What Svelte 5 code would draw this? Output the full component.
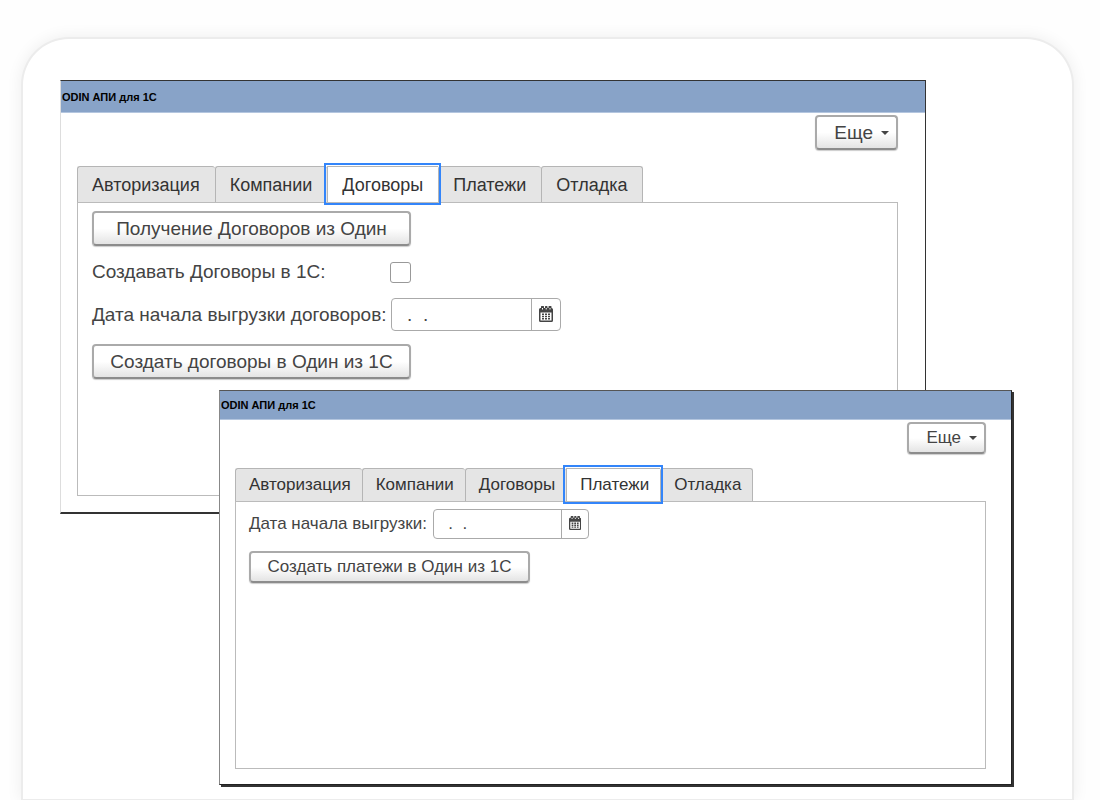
<script>
    const tabs = ["Авторизация", "Компании", "Договоры", "Платежи", "Отладка"];

    let windows = $state([
        { id: "contracts", size: "large", active: "Договоры", date: "  .  .", create: false },
        { id: "payments", size: "small", active: "Платежи", date: "  .  .", create: false }
    ]);
</script>

{#snippet dateField(win, label)}
    <div class="row">
        <label for="{win.id}-date">{label}</label>
        <div class="date">
            <input id="{win.id}-date" type="text" bind:value={win.date} />
            <button type="button" aria-label="Выбрать дату">
                <svg viewBox="0 0 14 16" aria-hidden="true">
                    <path
                        fill="#444"
                        fill-rule="evenodd"
                        d="M1.5 2H2V1a1 1 0 0 1 3 0v1h1V1a1 1 0 0 1 2.500 0v1h1V1a1 1 0 0 1 3 0v1A1.500 1.500 0 0 1 14 3.500v11a1.500 1.500 0 0 1-1.500 1.500h-11A1.500 1.500 0 0 1 0 14.500v-11A1.500 1.500 0 0 1 1.500 2zM1.500 6.500v8h11v-8z"
                    />
                    <path fill="#fff" d="M3 2h1v1.500H3zM6.700 2h1v1.500h-1zM10.500 2h1v1.500h-1z" />
                    <path
                        fill="#444"
                        d="M3 7.500h2V9H3zM6 7.500h2V9H6zM9 7.500h2V9H9zM3 9.800h2v1.500H3zM6 9.800h2v1.500H6zM9 9.800h2v1.500H9zM3 12h2v1.500H3zM6 12h2v1.500H6zM9 12h2v1.500H9z"
                    />
                </svg>
            </button>
        </div>
    </div>
{/snippet}

<main class="card">
    {#each windows as win (win.id)}
        <section class="window {win.size}">
            <h2>ODIN АПИ для 1С</h2>

            <div class="body">
                <div class="toolbar">
                    <button type="button" class="btn more">Еще <span class="caret"></span></button>
                </div>

                <div class="tabs" role="tablist">
                    {#each tabs as tab}
                        <button
                            type="button"
                            role="tab"
                            class="tab"
                            class:active={win.active === tab}
                            aria-selected={win.active === tab}
                            onclick={() => (win.active = tab)}
                        >{tab}</button>
                    {/each}
                </div>

                <div class="panel" role="tabpanel">
                    {#if win.active === "Договоры"}
                        <button type="button" class="btn wide">Получение Договоров из Один</button>
                        <div class="row check">
                            <label for="{win.id}-create">Создавать Договоры в 1С:</label>
                            <input id="{win.id}-create" type="checkbox" bind:checked={win.create} />
                        </div>
                        {@render dateField(win, "Дата начала выгрузки договоров:")}
                        <button type="button" class="btn wide">Создать договоры в Один из 1С</button>
                    {:else if win.active === "Платежи"}
                        {@render dateField(win, "Дата начала выгрузки:")}
                        <button type="button" class="btn wide">Создать платежи в Один из 1С</button>
                    {/if}
                </div>
            </div>
        </section>
    {/each}
</main>

<style>
:global(body) {
    background: #fefefe;
}

.card {
    position: relative;
    box-sizing: border-box;
    min-height: calc(100vh - 37px);
    margin: 37px 26px 0 21px;
    border: 2px solid #ececec;
    border-bottom-width: 1px;
    border-radius: 48px 48px 0 0;
    background: #fff;
    box-shadow: 0 0 16px rgba(0, 0, 0, 0.07);
    font-family: "Liberation Sans", Arial, sans-serif;
}

.window {
    position: absolute;
    display: flex;
    flex-direction: column;
    box-sizing: border-box;
    background: #fff;
    color: #333;
    font-size: var(--text);
    line-height: 20px;
}

/* the two windows overlap on the card */
.large {
    --text: 19px;
    --tab-text: 18px;
    --title-height: 32px;
    --pad: 16px;
    --right: 27px;
    --inset: 14px;
    --tab-padding: 0 15px 0 14px;
    --tab-height: 36px;
    --control: 35px;
    --field: 33px;
    --field-width: 170px;
    --picker: 29px;
    --button: 319px;
    --toolbar-gap: 16px;
    --panel-top: 8px;
    --row-gap: 13px;
    --label-gap: 4px;
    top: 41px;
    left: 37px;
    right: 146px;
    height: 434px;
    border: 1px solid #333;
    border-left-color: #ddd;
    border-bottom-width: 2px;
}

.small {
    --text: 17px;
    --tab-text: 17px;
    --title-height: 29px;
    --pad: 15px;
    --right: 25px;
    --inset: 13px;
    --tab-padding: 0 11px 0 13px;
    --tab-height: 33px;
    --control: 32px;
    --field: 30px;
    --field-width: 156px;
    --picker: 27px;
    --button: 281px;
    --toolbar-gap: 14px;
    --panel-top: 7px;
    --row-gap: 12px;
    --label-gap: 6px;
    top: 351px;
    left: 196px;
    right: 60px;
    height: 395px;
    border: 1px solid #555;
    border-left-color: #888;
    border-right-color: #222;
    border-bottom-color: #222;
    box-shadow: 2px 2px 0 #333;
}

h2 {
    margin: 0;
    padding-left: 1px;
    border-bottom: 1px solid #b4c6df;
    box-sizing: border-box;
    height: var(--title-height);
    background: #88a3c8;
    color: #000;
    font-size: 11px;
    line-height: var(--title-height);
}

.body {
    display: flex;
    flex: 1;
    flex-direction: column;
    padding: 2px var(--right) var(--pad) var(--pad);
}

.toolbar {
    display: flex;
    justify-content: flex-end;
    margin-bottom: var(--toolbar-gap);
}

button,
input {
    box-sizing: border-box;
    margin: 0;
    color: inherit;
    font: inherit;
}

.btn {
    height: var(--control);
    padding: 0 16px;
    border: 2px solid #aaa;
    border-bottom-color: #8c8c8c;
    border-radius: 4px;
    background: linear-gradient(#fff 50%, #e4e4e4);
    box-shadow: 0 1px 1px #ccc;
    color: #444;
}

.wide {
    min-width: var(--button);
}

.more {
    display: flex;
    align-items: center;
    gap: 8px;
    padding: 0 7px 0 17px;
}

.caret {
    border: 4px solid transparent;
    border-top-color: #444;
    border-bottom: 0;
}

.tabs {
    display: flex;
}

.tab {
    position: relative;
    height: var(--tab-height);
    padding: var(--tab-padding);
    border: 1px solid #b5b5b5;
    border-right-width: 0;
    border-bottom: 0;
    border-radius: 3px 3px 0 0;
    background: #e5e5e5;
    font-size: var(--tab-text);
}

.tab:last-child {
    border-right-width: 1px;
}

.tab.active {
    z-index: 1;
    border-radius: 0;
    background: #fff;
    outline: 2px solid #3385fa;
    outline-offset: 1px;
}

.panel {
    display: flex;
    flex: 1;
    flex-direction: column;
    align-items: flex-start;
    gap: var(--row-gap);
    padding: var(--panel-top) var(--inset);
    border: 1px solid #bbb;
}

.row {
    display: flex;
    align-items: center;
    gap: var(--label-gap);
    color: #444;
}

.check {
    width: var(--button);
    min-height: 26px;
    justify-content: space-between;
}

input[type="checkbox"] {
    width: 21px;
    height: 21px;
    border: 1px solid #999;
    border-radius: 3px;
    background: #fff;
    appearance: none;
}

input[type="checkbox"]:checked {
    background: #3385fa;
}

.date {
    display: flex;
    box-sizing: border-box;
    width: var(--field-width);
    height: var(--field);
    border: 1px solid #aaa;
    border-radius: 4px;
    background: #fff;
}

.date input {
    flex: 1;
    min-width: 0;
    padding: 0 5px;
    border: 0;
    background: none;
    white-space: pre;
}

.date button {
    display: flex;
    align-items: center;
    justify-content: center;
    width: var(--picker);
    padding: 0 0 2px;
    border: 0;
    border-left: 1px solid #aaa;
    background: none;
}

.date svg {
    height: calc(var(--text) - 3px);
}
</style>
